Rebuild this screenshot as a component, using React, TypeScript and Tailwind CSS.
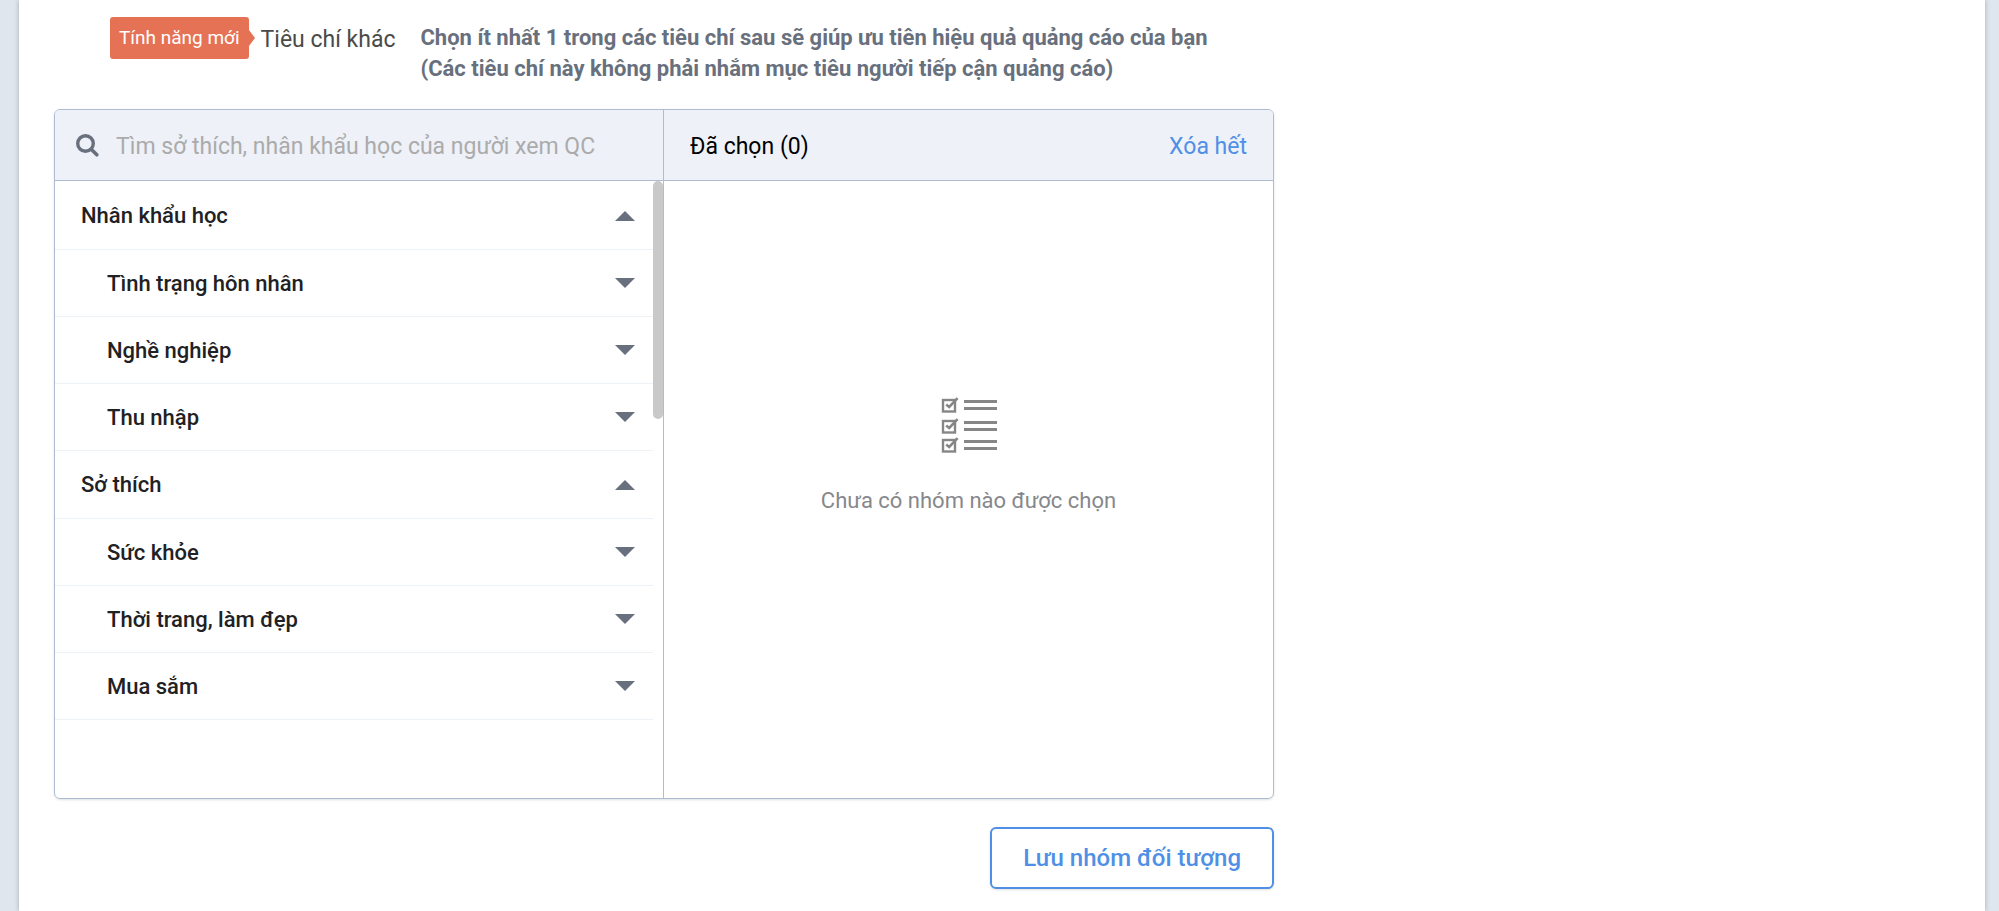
import { useState } from "react";

type Group = {
  title: string;
  items: string[];
};

const groups: Group[] = [
  { title: "Nhân khẩu học", items: ["Tình trạng hôn nhân", "Nghề nghiệp", "Thu nhập"] },
  { title: "Sở thích", items: ["Sức khỏe", "Thời trang, làm đẹp", "Mua sắm"] },
];

function Caret({ up = false }: { up?: boolean }) {
  return (
    <svg width="20" height="10" viewBox="0 0 20 10" fill="#68707d" aria-hidden="true">
      {up ? <path d="M0 10L10 0L20 10Z" /> : <path d="M0 0H20L10 10Z" />}
    </svg>
  );
}

function SearchIcon() {
  return (
    <svg width="23" height="23" viewBox="0 0 23 23" fill="none" stroke="#68707d" strokeLinecap="round" aria-hidden="true">
      <circle cx="9.5" cy="9.5" r="7.8" strokeWidth="3.4" />
      <path d="M15.5 15.5L20.8 20.8" strokeWidth="3.6" />
    </svg>
  );
}

function ChecklistIcon() {
  return (
    <svg width="56" height="56" viewBox="0 0 56 56" fill="none" stroke="#868686" aria-hidden="true">
      {[0, 21, 40].map((y) => (
        <g key={y} transform={`translate(0 ${y})`}>
          <rect x="2" y="3" width="12" height="11.5" strokeWidth="2.4" />
          <path d="M5.2 7.6L8.2 10L16.6 1.2" strokeWidth="2.6" />
          <path d="M23 4.5H56M23 11.5H56" strokeWidth="3" />
        </g>
      ))}
    </svg>
  );
}

export default function App() {
  const [open, setOpen] = useState<string[]>(["Nhân khẩu học", "Sở thích"]);

  const toggle = (title: string) => {
    setOpen(open.includes(title) ? open.filter((t) => t !== title) : [...open, title]);
  };

  return (
    <div className="min-h-screen bg-[#dfe6ee] pl-[19px] pr-[14px] flex font-[Roboto,sans-serif] text-[22px]">
      <main className="flex-1 bg-white pl-[35px] pt-[17px] shadow-[0_0_5px_rgba(0,0,0,0.25)]">
        <div className="max-w-[1220px]">
          {/* Heading */}
          <header className="flex items-start pl-14 mb-[25px]">
            <div className="flex items-center">
              <span className="h-[42px] px-[9px] flex items-center rounded-[3px] bg-[#e67255] text-white text-[19px]">
                Tính năng mới
              </span>
              <svg width="6" height="16" viewBox="0 0 6 16" fill="#e67255" aria-hidden="true">
                <path d="M0 0L6 8L0 16Z" />
              </svg>
            </div>
            <h2 className="ml-1.5 leading-[46px] text-[23px] text-[#4a4a4a]">Tiêu chí khác</h2>
            <p className="ml-[25px] pt-[5px] leading-[31px] font-bold text-[#68707d]">
              Chọn ít nhất 1 trong các tiêu chí sau sẽ giúp ưu tiên hiệu quả quảng cáo của bạn
              <br />
              (Các tiêu chí này không phải nhắm mục tiêu người tiếp cận quảng cáo)
            </p>
          </header>

          {/* Picker */}
          <section className="grid grid-cols-2 rounded-md border border-[#aebdd1] shadow-sm overflow-hidden">
            <div className="border-r border-[#aebdd1]">
              <label className="h-[71px] pl-[21px] flex items-center gap-[17px] bg-[#eef1f7] border-b border-[#aebdd1] text-[23px]">
                <SearchIcon />
                <input
                  type="text"
                  aria-label="Tìm sở thích, nhân khẩu học"
                  placeholder="Tìm sở thích, nhân khẩu học của người xem QC"
                  className="flex-1 min-w-0 pt-1 bg-transparent outline-none placeholder:text-[#ababab]"
                />
              </label>
              <div className="h-[617px] flex">
                <ul className="flex-1 pt-px font-medium text-[#212124]">
                  {groups.map((group) => (
                    <li key={group.title}>
                      <button
                        type="button"
                        aria-expanded={open.includes(group.title)}
                        onClick={() => toggle(group.title)}
                        className="w-full h-[68px] pl-[26px] pr-[18px] flex items-center justify-between border-b border-[#edf2f7]"
                      >
                        {group.title}
                        <Caret up={open.includes(group.title)} />
                      </button>
                      {open.includes(group.title) && (
                        <ul>
                          {group.items.map((item) => (
                            <li key={item}>
                              <button
                                type="button"
                                className="w-full h-[67px] pl-[52px] pr-[18px] flex items-center justify-between border-b border-[#edf2f7]"
                              >
                                {item}
                                <Caret />
                              </button>
                            </li>
                          ))}
                        </ul>
                      )}
                    </li>
                  ))}
                </ul>
                <div className="w-[10px]">
                  <div className="h-[238px] rounded-full bg-[#c9c9c9]" />
                </div>
              </div>
            </div>

            <div className="flex flex-col">
              <div className="h-[71px] px-[26px] pt-1 flex items-center justify-between bg-[#eef1f7] border-b border-[#aebdd1] text-[23px]">
                <span className="text-black">Đã chọn (0)</span>
                <button type="button" className="text-[#4f90e6]">
                  Xóa hết
                </button>
              </div>
              <div className="flex-1 pt-[216px] flex flex-col items-center gap-8 text-[#86888c]">
                <ChecklistIcon />
                <p className="leading-[32px]">Chưa có nhóm nào được chọn</p>
              </div>
            </div>
          </section>

          <div className="mt-7 flex justify-end">
            <button
              type="button"
              className="h-[62px] px-[31px] rounded-md border-2 border-[#4f90e6] shadow-sm text-2xl font-medium text-[#4f90e6]"
            >
              Lưu nhóm đối tượng
            </button>
          </div>
        </div>
      </main>
    </div>
  );
}
